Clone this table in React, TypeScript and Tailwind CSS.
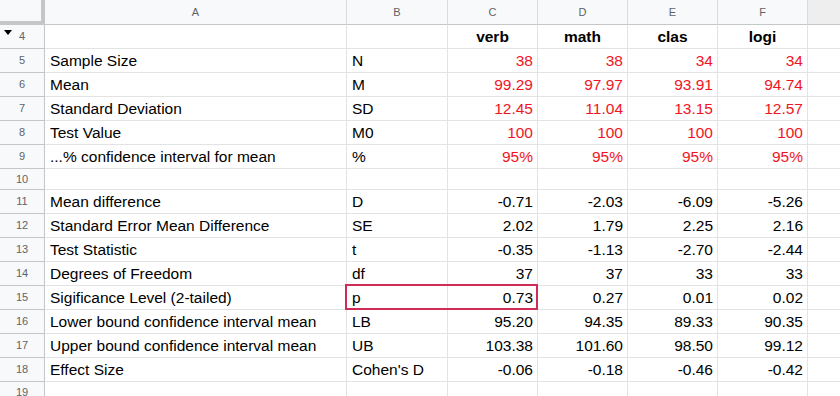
const cols = [
  { key: "A", w: "w-[302px]" },
  { key: "B", w: "w-[101px]" },
  { key: "C", w: "w-[90px]" },
  { key: "D", w: "w-[90px]" },
  { key: "E", w: "w-[90px]" },
  { key: "F", w: "w-[90px]" },
];

type Row = {
  n: number;
  label?: string;
  sym?: string;
  vals?: string[];
  red?: boolean;
  head?: boolean;
  short?: boolean;
};

const rows: Row[] = [
  { n: 4, vals: ["verb", "math", "clas", "logi"], head: true },
  { n: 5, label: "Sample Size", sym: "N", vals: ["38", "38", "34", "34"], red: true },
  { n: 6, label: "Mean", sym: "M", vals: ["99.29", "97.97", "93.91", "94.74"], red: true },
  { n: 7, label: "Standard Deviation", sym: "SD", vals: ["12.45", "11.04", "13.15", "12.57"], red: true },
  { n: 8, label: "Test Value", sym: "M0", vals: ["100", "100", "100", "100"], red: true },
  { n: 9, label: "...% confidence interval for mean", sym: "%", vals: ["95%", "95%", "95%", "95%"], red: true },
  { n: 10, short: true },
  { n: 11, label: "Mean difference", sym: "D", vals: ["-0.71", "-2.03", "-6.09", "-5.26"] },
  { n: 12, label: "Standard Error Mean Difference", sym: "SE", vals: ["2.02", "1.79", "2.25", "2.16"] },
  { n: 13, label: "Test Statistic", sym: "t", vals: ["-0.35", "-1.13", "-2.70", "-2.44"] },
  { n: 14, label: "Degrees of Freedom", sym: "df", vals: ["37", "37", "33", "33"] },
  { n: 15, label: "Sigificance Level (2-tailed)", sym: "p", vals: ["0.73", "0.27", "0.01", "0.02"] },
  { n: 16, label: "Lower bound confidence interval mean", sym: "LB", vals: ["95.20", "94.35", "89.33", "90.35"] },
  { n: 17, label: "Upper bound confidence interval mean", sym: "UB", vals: ["103.38", "101.60", "98.50", "99.12"] },
  { n: 18, label: "Effect Size", sym: "Cohen's D", vals: ["-0.06", "-0.18", "-0.46", "-0.42"] },
  { n: 19 },
];

const cell = "shrink-0 border-r border-b border-[#e2e3e3] flex items-center overflow-hidden whitespace-nowrap";

export default function App() {
  return (
    <div
      className="relative w-[840px] h-[396px] overflow-hidden bg-white text-black"
      style={{ fontFamily: '"Liberation Sans", Arial, sans-serif' }}
    >
      {/* column headers */}
      <div className="flex h-[25px]">
        <div className="shrink-0 w-[45px] h-[25px] bg-[#f8f9fa] border-r-4 border-b-4 border-[#c4c7c5]" />
        {cols.map((c) => (
          <div
            key={c.key}
            className={`${c.w} shrink-0 h-[25px] bg-[#f8f9fa] border-r border-[#dadce0] border-b border-b-[#c4c7c5] flex items-center justify-center text-[11px] text-[#5f6368]`}
          >
            {c.key}
          </div>
        ))}
        <div className="flex-1 h-[25px] bg-[#eeeeee] border-b border-[#c4c7c5]" />
      </div>

      {rows.map((r) => {
        const h = r.short ? "h-[21px]" : r.n === 19 ? "h-[22px]" : "h-[24px]";
        return (
          <div key={r.n} className={`flex ${h}`}>
            <div className={`relative w-[45px] ${h} shrink-0 bg-[#f8f9fa] border-r border-b border-[#c4c7c5] flex items-center justify-center text-[11px] text-[#5f6368]`}>
              {r.n === 4 && (
                <span className="absolute left-[4px] top-[5px] w-0 h-0 border-l-[4px] border-r-[4px] border-t-[5px] border-l-transparent border-r-transparent border-t-black" />
              )}
              {r.n}
            </div>
            <div className={`${cell} w-[302px] ${h} pl-[5px] text-[15.5px]`}>{r.label}</div>
            <div className={`${cell} w-[101px] ${h} pl-[5px] text-[15.5px]`}>{r.sym}</div>
            {[0, 1, 2, 3].map((i) => (
              <div
                key={i}
                className={`${cell} w-[90px] ${h} text-[15.5px] ${
                  r.head ? "justify-center font-bold" : "justify-end pr-[4px]"
                } ${r.red ? "text-[#f0141e]" : ""}`}
              >
                {r.vals?.[i]}
              </div>
            ))}
            <div className={`flex-1 ${h} border-b border-[#e2e3e3]`} />
          </div>
        );
      })}

      {/* selection B15:C15 */}
      <div className="absolute left-[345px] top-[284px] w-[193px] h-[26px] border-2 border-[#cf2d57]" />
    </div>
  );
}
